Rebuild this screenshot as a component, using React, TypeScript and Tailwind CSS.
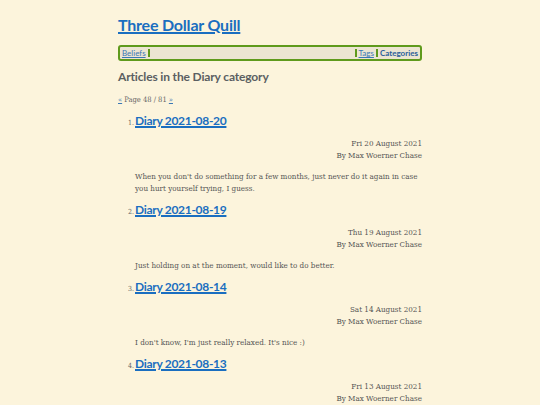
const posts = [
  {
    n: 1,
    title: "Diary 2021-08-20",
    date: "Fri 20 August 2021",
    excerpt:
      "When you don't do something for a few months, just never do it again in case you hurt yourself trying, I guess.",
  },
  {
    n: 2,
    title: "Diary 2021-08-19",
    date: "Thu 19 August 2021",
    excerpt: "Just holding on at the moment, would like to do better.",
  },
  {
    n: 3,
    title: "Diary 2021-08-14",
    date: "Sat 14 August 2021",
    excerpt: "I don't know, I'm just really relaxed. It's nice :)",
  },
  {
    n: 4,
    title: "Diary 2021-08-13",
    date: "Fri 13 August 2021",
    excerpt: "",
  },
];

const sans = "font-['Lato','Noto_Sans',sans-serif]";
const serif = "font-['DejaVu_Serif_Condensed','DejaVu_Serif',serif]";

export default function App() {
  return (
    <div className="min-h-[405px] bg-[#fcf4dc] text-[#4a4a4a]">
      <div className="mx-auto w-[304px] pt-[14px]">
        <h1 className={`${sans} text-[16px] font-bold leading-[22px] tracking-[-0.2px]`}>
          <a href="#" className="text-[#1a6ec0] underline decoration-[1.5px]">
            Three Dollar Quill
          </a>
        </h1>

        <nav
          className={`${sans} mt-[9px] flex h-[16px] items-center rounded-[3px] border-2 border-[#5f9a1c] bg-[#ece5d2] text-[8px] leading-none`}
        >
          <a href="#" className="border-r-2 border-[#5f9a1c] px-[2px] text-[#3a78b5] underline">
            Beliefs
          </a>
          <div className="flex-1" />
          <a href="#" className="border-l-2 border-[#5f9a1c] px-[2px] text-[#3a78b5] underline">
            Tags
          </a>
          <span className="border-l-2 border-[#5f9a1c] px-[2px] font-bold text-[#2a5e99]">
            Categories
          </span>
        </nav>

        <h2 className={`${sans} mt-[7px] text-[12px] font-bold leading-[18px] tracking-[-0.15px] text-[#5b5f62]`}>
          Articles in the Diary category
        </h2>

        <p className={`${serif} mt-[8px] text-[7.5px] text-[#666]`}>
          <a href="#" className="text-[#3a78b5] underline">«</a> Page 48 / 81{" "}
          <a href="#" className="text-[#3a78b5] underline">»</a>
        </p>

        <ol className="mt-[7px]">
          {posts.map((p) => (
            <li key={p.n} className="pb-[6px]">
              <div className="flex items-baseline pl-[10px]">
                <span className={`${serif} w-[7px] text-[7px] text-[#666]`}>{p.n}.</span>
                <a
                  href="#"
                  className={`${sans} text-[12px] font-bold leading-[18px] tracking-[-0.3px] text-[#1a6ec0] underline decoration-[1.5px]`}
                >
                  {p.title}
                </a>
              </div>
              <div className={`${serif} mt-[8px] text-right text-[8px] leading-[12px] text-[#555]`}>
                <div>{p.date}</div>
                <div>By Max Woerner Chase</div>
              </div>
              {p.excerpt ? (
                <p className={`${serif} mt-[9px] pl-[17px] text-[8px] leading-[12px] text-[#555]`}>
                  {p.excerpt}
                </p>
              ) : null}
              {!p.excerpt && <div className="h-px" />}
            </li>
          ))}
        </ol>
      </div>
    </div>
  );
}
